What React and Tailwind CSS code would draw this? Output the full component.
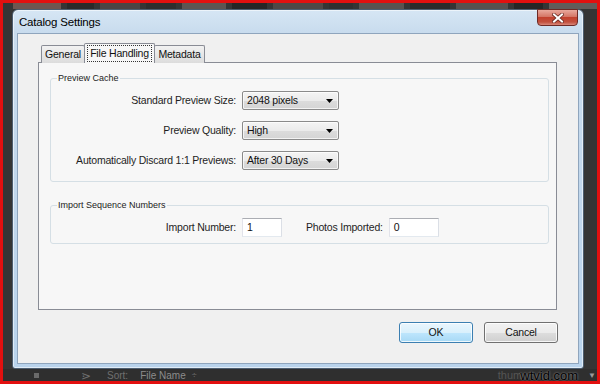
export default function App() {
  const thumbs = [
    { w: 'w-[48px]', c: 'bg-[#6e5650]' },
    { w: 'w-[28px]', c: 'bg-[#2a2a2a]' },
    { w: 'w-[40px]', c: 'bg-[#4a4444]' },
    { w: 'w-[30px]', c: 'bg-[#2e2e2e]' },
    { w: 'w-[44px]', c: 'bg-[#5c5552]' },
    { w: 'w-[36px]', c: 'bg-[#262626]' },
    { w: 'w-[50px]', c: 'bg-[#4e4846]' },
    { w: 'w-[24px]', c: 'bg-[#303030]' },
    { w: 'w-[46px]', c: 'bg-[#595350]' },
    { w: 'w-[40px]', c: 'bg-[#2b2b2b]' },
    { w: 'w-[52px]', c: 'bg-[#57514f]' },
    { w: 'w-[30px]', c: 'bg-[#262626]' },
    { w: 'w-[48px]', c: 'bg-[#625c5a]' },
  ];

  const txt = 'text-[10.5px] tracking-[-0.2px] leading-none whitespace-nowrap';

  const Dropdown = ({ value }) => (
    <div className="w-[97px] h-[19px] rounded-[2px] border border-[#8a8a8a] bg-[linear-gradient(180deg,#f4f4f4_0%,#ebebeb_50%,#dcdcdc_51%,#d4d4d4_100%)] flex items-center pl-[4px] pr-[5px] shadow-[inset_0_0_0_1px_rgba(255,255,255,0.7)]">
      <span className={`${txt} text-[#111]`}>{value}</span>
      <svg className="ml-auto" width="7" height="4" viewBox="0 0 7 4">
        <path d="M0 0h7L3.5 4z" fill="#000" />
      </svg>
    </div>
  );

  const Row = ({ label, value }) => (
    <div className="flex items-center h-[19px]">
      <span className={`w-[185px] text-right ${txt} text-[#1e1e1e]`}>{label}</span>
      <div className="ml-[6px]">
        <Dropdown value={value} />
      </div>
    </div>
  );

  const Input = ({ value, w }) => (
    <div className={`${w} h-[19px] bg-white border border-[#abadb3] border-l-[#e2e3ea] border-r-[#dbdfe6] border-b-[#e3e9ef] flex items-center pl-[4px] ${txt} text-[#111]`}>
      {value}
    </div>
  );

  return (
    <div className="w-[600px] h-[384px] border-[3px] border-[#e2100f] bg-[#353535] flex flex-col overflow-hidden font-['Liberation_Sans',Arial,sans-serif]">
      {/* background thumbnail strip */}
      <div className="h-[6px] flex gap-[6px] pl-[10px] shrink-0">
        {thumbs.map((t, i) => (
          <div key={i} className={`${t.w} ${t.c} h-full`} />
        ))}
      </div>

      {/* dialog row */}
      <div className="flex pl-[9px] shrink-0">
        <div className="w-[572px] h-[360px] rounded-t-[6px] rounded-b-[3px] border border-[#4d5e70] bg-[linear-gradient(180deg,#d6e6f4_0%,#c9dcee_6%,#c3d8ec_40%,#b9d3ec_100%)] shadow-[inset_0_0_0_1px_rgba(255,255,255,0.55)] flex flex-col px-[4px] pb-[4px]">
          {/* title bar */}
          <div className="h-[23px] flex items-start shrink-0">
            <span className="ml-[2px] mt-[7px] text-[11.5px] tracking-[-0.2px] leading-none text-black whitespace-nowrap">Catalog Settings</span>
            <div className="ml-auto mr-[1px] w-[41px] h-[17px] -mt-px rounded-b-[4px] border border-[#6d2a26] bg-[linear-gradient(180deg,#e9a99d_0%,#d47565_45%,#c2412e_50%,#c2503e_80%,#d9887a_100%)] flex items-center justify-center">
              <svg width="12" height="10" viewBox="0 0 12 10">
                <path d="M2 1.5L10 8.5M10 1.5L2 8.5" stroke="#6a2a22" strokeWidth="3.6" strokeLinecap="square" />
                <path d="M2 1.5L10 8.5M10 1.5L2 8.5" stroke="#ffffff" strokeWidth="2" strokeLinecap="square" />
              </svg>
            </div>
          </div>

          {/* client area */}
          <div className="flex-1 border border-[#8fa5bd] bg-[#f0f0f0] flex flex-col pl-[20px] pr-[20px] pt-[9px]">
            {/* tabs */}
            <div className="flex items-end h-[20px] pl-[3px] -mb-px relative z-10">
              <div className={`w-[44px] h-[18px] border border-[#898c95] border-b-0 rounded-t-[2px] bg-[linear-gradient(180deg,#f2f2f2,#dcdcdc)] flex items-center justify-center ${txt} text-[#111]`}>
                General
              </div>
              <div className="w-[71px] h-[20px] -ml-px border border-[#898c95] border-b-0 rounded-t-[2px] bg-[#f7f7f7] flex items-center justify-center">
                <span className={`border border-dotted border-[#333] px-[2px] py-[2px] ${txt} text-[#111]`}>File Handling</span>
              </div>
              <div className={`w-[51px] h-[18px] -ml-px border border-[#898c95] border-b-0 rounded-t-[2px] bg-[linear-gradient(180deg,#f2f2f2,#dcdcdc)] flex items-center justify-center ${txt} text-[#111]`}>
                Metadata
              </div>
            </div>

            {/* panel */}
            <div className="w-[519px] h-[248px] border border-[#898c95] bg-[#f7f7f7] shrink-0 pl-[11px] pt-[9px] flex flex-col">
              <fieldset className="w-[499px] border border-[#d5dfe5] rounded-[3px] pb-[11px]">
                <legend className="ml-[6px] px-[1px] text-[9px] leading-[12px] text-[#222] whitespace-nowrap">Preview Cache</legend>
                <div className="flex flex-col gap-[11px] mt-[7px]">
                  <Row label="Standard Preview Size:" value="2048 pixels" />
                  <Row label="Preview Quality:" value="High" />
                  <Row label="Automatically Discard 1:1 Previews:" value="After 30 Days" />
                </div>
              </fieldset>

              <fieldset className="w-[499px] mt-[17px] border border-[#d5dfe5] rounded-[3px] pb-[6px]">
                <legend className="ml-[6px] px-[1px] text-[9px] leading-[12px] text-[#222] whitespace-nowrap">Import Sequence Numbers</legend>
                <div className="flex items-center h-[19px] mt-[7px]">
                  <span className={`w-[185px] text-right ${txt} text-[#1e1e1e]`}>Import Number:</span>
                  <div className="ml-[6px]">
                    <Input value="1" w="w-[40px]" />
                  </div>
                  <span className={`ml-[24px] ${txt} text-[#1e1e1e]`}>Photos Imported:</span>
                  <div className="ml-[6px]">
                    <Input value="0" w="w-[50px]" />
                  </div>
                </div>
              </fieldset>
            </div>

            {/* buttons */}
            <div className="flex justify-end gap-[11px] mt-[12px]">
              <div className={`w-[74px] h-[21px] rounded-[3px] border border-[#3c7fb1] bg-[linear-gradient(180deg,#eaf6fd_0%,#d9f0fc_50%,#bee6fd_51%,#a7d9f5_100%)] shadow-[inset_0_0_0_1px_rgba(255,255,255,0.8)] flex items-center justify-center ${txt} text-[#111]`}>
                OK
              </div>
              <div className={`w-[74px] h-[21px] rounded-[3px] border border-[#707070] bg-[linear-gradient(180deg,#f2f2f2_0%,#ebebeb_50%,#dddddd_51%,#cfcfcf_100%)] shadow-[inset_0_0_0_1px_rgba(255,255,255,0.8)] flex items-center justify-center ${txt} text-[#111]`}>
                Cancel
              </div>
            </div>
          </div>
        </div>
      </div>

      {/* bottom strip */}
      <div className="flex-1 flex items-center bg-[#2f2f2f] text-[11px] leading-none">
        <div className="ml-[31px] w-[5px] h-[5px] bg-[#6a6a6a]" />
        <span className="ml-[42px] text-[#6f6f6f] text-[12px]">⋗</span>
        <span className="ml-[16px] text-[#6f6f6f] text-[10px]">Sort:</span>
        <span className="ml-[12px] text-[#8c8c8c] text-[10px]">File Name</span>
        <span className="ml-[6px] text-[#6f6f6f] text-[9px]">÷</span>
        <span className="ml-auto text-[#555] text-[11px]">thum</span>
        <span className="text-black text-[13px] [text-shadow:0_0_2px_rgba(255,255,255,0.6)] -ml-[2px]">wtvid.com</span>
        <span className="ml-[10px] mr-[1px] text-[#9a9a9a] text-[8px]">▼</span>
      </div>
    </div>
  );
}
